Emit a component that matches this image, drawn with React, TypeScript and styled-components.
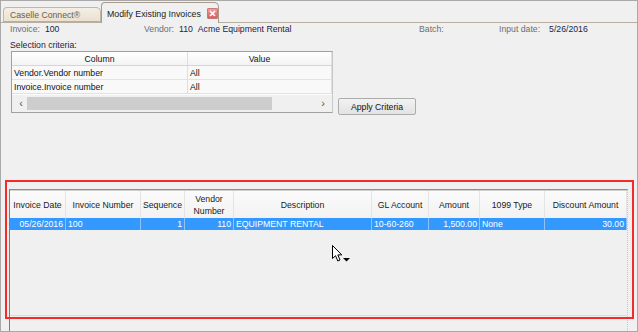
import styled, {createGlobalStyle} from 'styled-components';

const GlobalStyle = createGlobalStyle`
	html, body {
		margin: 0;
		padding: 0;
		background: #f0f0f0;
	}
	* {
		box-sizing: border-box;
	}
`;

interface Column {
	title: string;
	width: number;
	align: 'left' | 'right';
	value: string;
}

// invoice grid columns, widths taken from the screen
const columns: Column[] = [
	{title: 'Invoice Date', width: 56, align: 'right', value: '05/26/2016'},
	{title: 'Invoice Number', width: 75, align: 'left', value: '100'},
	{title: 'Sequence', width: 44, align: 'right', value: '1'},
	{title: 'Vendor\nNumber', width: 49, align: 'right', value: '110'},
	{title: 'Description', width: 138, align: 'left', value: 'EQUIPMENT RENTAL'},
	{title: 'GL Account', width: 57, align: 'left', value: '10-60-260'},
	{title: 'Amount', width: 51, align: 'right', value: '1,500.00'},
	{title: '1099 Type', width: 65, align: 'left', value: 'None'},
	{title: 'Discount Amount', width: 82, align: 'right', value: '30.00'},
];

const gridTemplate = columns.map((c) => `${c.width}px`).join(' ');

const criteria = [
	{column: 'Vendor.Vendor number', value: 'All'},
	{column: 'Invoice.Invoice number', value: 'All'},
];

const App = () => {
	return (
		<>
			<GlobalStyle />
			<Window>
				<TabStrip>
					<Tab>Caselle Connect®</Tab>
					<Tab $active>
						Modify Existing Invoices
						<CloseBox>
							<svg width="7" height="7" viewBox="0 0 7 7">
								<path d="M1 1 L6 6 M6 1 L1 6" stroke="#fff" strokeWidth="1.6" />
							</svg>
						</CloseBox>
					</Tab>
				</TabStrip>

				<InfoRow>
					<InfoField $gap={5}>
						<Label>Invoice:</Label>
						<Value>100</Value>
					</InfoField>
					<InfoField $gap={5}>
						<Label>Vendor:</Label>
						<Value>110</Value>
						<Value>Acme Equipment Rental</Value>
					</InfoField>
					<InfoField $gap={5}>
						<Label>Batch:</Label>
					</InfoField>
					<InfoField $gap={9}>
						<Label>Input date:</Label>
						<Value>5/26/2016</Value>
					</InfoField>
				</InfoRow>

				<SectionTitle>Selection criteria:</SectionTitle>

				<CriteriaArea>
					<CriteriaTable>
						<CriteriaRow $header>
							<CriteriaCell $header>Column</CriteriaCell>
							<CriteriaCell $header>Value</CriteriaCell>
						</CriteriaRow>
						{criteria.map((c) => (
							<CriteriaRow key={c.column}>
								<CriteriaCell>{c.column}</CriteriaCell>
								<CriteriaCell>{c.value}</CriteriaCell>
							</CriteriaRow>
						))}
						<HScroll>
							<ScrollArrow>‹</ScrollArrow>
							<ScrollTrack>
								<ScrollThumb />
							</ScrollTrack>
							<ScrollArrow>›</ScrollArrow>
						</HScroll>
					</CriteriaTable>
					<Button>Apply Criteria</Button>
				</CriteriaArea>

				<GridPanel>
					<GridHeader>
						{columns.map((c) => (
							<HeaderCell key={c.title}>{c.title}</HeaderCell>
						))}
					</GridHeader>
					<GridBody>
						<DataRow $selected>
							{columns.map((c) => (
								<DataCell key={c.title} $align={c.align}>
									{c.value}
								</DataCell>
							))}
						</DataRow>
					</GridBody>
				</GridPanel>

				{/* annotation drawn over the screenshot */}
				<Highlight />

				<Cursor width="20" height="20" viewBox="0 0 20 20">
					<path
						d="M0.5 0.5 L0.5 13.5 L3.5 10.7 L5.8 16 L8 15 L5.8 9.9 L9.8 9.9 Z"
						fill="#fff"
						stroke="#000"
						strokeWidth="1"
						strokeLinejoin="round"
					/>
					<path d="M11 13 L18 13 L14.5 16.5 Z" fill="#000" />
				</Cursor>
			</Window>
		</>
	);
};

const Window = styled.div`
	position: relative;
	width: 638px;
	height: 332px;
	border: 1px solid #a9a9a9;
	background: #f0f0f0;
	display: flex;
	flex-direction: column;
	font-family: 'Liberation Sans', Arial, sans-serif;
	font-size: 8.7px;
	color: #1c1c3c;
	overflow: hidden;
`;

const TabStrip = styled.div`
	display: flex;
	align-items: flex-end;
	height: 22px;
	padding-left: 2px;
	border-bottom: 1px solid #b9ada0;
`;

const Tab = styled.div<{$active?: boolean}>`
	display: flex;
	align-items: center;
	gap: 6px;
	height: ${(p) => (p.$active ? '21px' : '15px')};
	width: ${(p) => (p.$active ? '118px' : '98px')};
	margin-bottom: ${(p) => (p.$active ? '-1px' : '0')};
	padding: ${(p) => (p.$active ? '1px 0 0 5px' : '1px 0 0 6px')};
	background: ${(p) => (p.$active ? '#f0f0f0' : 'linear-gradient(#f4efe4, #e9e2d3)')};
	border: 1px solid ${(p) => (p.$active ? '#a89b8c' : '#c2b6a7')};
	border-bottom: ${(p) => (p.$active ? 'none' : '1px solid #b9ada0')};
	border-radius: 4px 5px 0 0;
	color: ${(p) => (p.$active ? '#1a1a1a' : '#6a5e50')};
	font-size: ${(p) => (p.$active ? '8.8px' : '8.7px')};
	white-space: nowrap;
`;

const CloseBox = styled.span`
	display: flex;
	align-items: center;
	justify-content: center;
	width: 11px;
	height: 11px;
	background: linear-gradient(#f0a0a0, #e0585a);
	border: 1px solid #c8787a;
	border-radius: 1px;
`;

const InfoRow = styled.div`
	display: grid;
	grid-template-columns: 134px 275px 80px 1fr;
	align-items: center;
	height: 12px;
	padding-left: 9px;
`;

const InfoField = styled.div<{$gap: number}>`
	display: flex;
	align-items: center;
	gap: ${(p) => p.$gap}px;
	white-space: nowrap;
`;

const Label = styled.span`
	color: #6e6e6e;
`;

const Value = styled.span`
	color: #1c1c48;
`;

const SectionTitle = styled.div`
	margin: 5px 0 0 9px;
	height: 11px;
	line-height: 11px;
	color: #1c1c3c;
`;

const CriteriaArea = styled.div`
	display: flex;
	align-items: flex-end;
	gap: 5px;
	margin: 0 0 0 10px;
`;

const CriteriaTable = styled.div`
	display: flex;
	flex-direction: column;
	width: 322px;
	height: 62px;
	border: 1px solid #a0a0a0;
	border-right-color: #c8c8c8;
	background: #fcfcfc;
`;

const CriteriaRow = styled.div<{$header?: boolean}>`
	display: grid;
	grid-template-columns: 176px 1fr;
	height: 14px;
	background: ${(p) => (p.$header ? 'linear-gradient(#ffffff, #f3f3f3)' : '#f9f9f9')};
	border-bottom: 1px solid ${(p) => (p.$header ? '#d5d5d5' : '#e2e2e2')};
`;

const CriteriaCell = styled.div<{$header?: boolean}>`
	display: flex;
	align-items: center;
	justify-content: ${(p) => (p.$header ? 'center' : 'flex-start')};
	padding-left: ${(p) => (p.$header ? '0' : '2px')};
	border-right: 1px solid #dedede;
	color: #111;
	white-space: nowrap;
	overflow: hidden;
`;

const HScroll = styled.div`
	display: flex;
	align-items: center;
	margin-top: auto;
	height: 17px;
	padding: 0 3px;
	background: #f0f0f0;
`;

const ScrollArrow = styled.span`
	width: 12px;
	text-align: center;
	font-size: 11px;
	line-height: 11px;
	color: #555;
`;

const ScrollTrack = styled.div`
	flex: 1;
	height: 13px;
	padding-right: 45px;
`;

const ScrollThumb = styled.div`
	height: 100%;
	background: #cdcdcd;
`;

const Button = styled.div`
	display: flex;
	align-items: center;
	justify-content: center;
	width: 78px;
	height: 17px;
	margin-bottom: -2px;
	border: 1px solid #acacac;
	border-radius: 2px;
	background: linear-gradient(#f2f2f2, #e3e3e3);
	color: #111;
`;

const GridPanel = styled.div`
	display: flex;
	flex-direction: column;
	flex: 1;
	width: 619px;
	margin: 76px 0 0 8px;
	border-left: 1px solid #7c7c7c;
	border-top: 1px solid #8e8e8e;
	border-right: 1px dotted #c8c8c8;
	padding-bottom: 15px;
`;

const GridHeader = styled.div`
	display: grid;
	grid-template-columns: ${gridTemplate};
	height: 28px;
	background: linear-gradient(#fbfbfb, #f2f2f2);
	border-top: 1px solid #d0d0d0;
`;

const HeaderCell = styled.div`
	display: flex;
	align-items: center;
	justify-content: center;
	text-align: center;
	white-space: pre-line;
	line-height: 12px;
	border-right: 1px solid #e4e4e4;
	color: #1a1a1a;
`;

const GridBody = styled.div`
	flex: 1;
	border-bottom: 1px solid #dcdcdc;
`;

const DataRow = styled.div<{$selected?: boolean}>`
	display: grid;
	grid-template-columns: ${gridTemplate};
	height: 12px;
	background: ${(p) => (p.$selected ? '#3399ff' : 'transparent')};
	color: ${(p) => (p.$selected ? '#ffffff' : '#111')};
`;

const DataCell = styled.div<{$align: 'left' | 'right'}>`
	display: flex;
	align-items: center;
	justify-content: ${(p) => (p.$align === 'right' ? 'flex-end' : 'flex-start')};
	padding: 0 2px;
	border-right: 1px solid #8ec3f7;
	white-space: nowrap;
	overflow: hidden;
`;

const Highlight = styled.div`
	position: absolute;
	left: 4px;
	top: 179px;
	width: 629px;
	height: 139px;
	border: 2px solid #f52a2a;
	pointer-events: none;
`;

const Cursor = styled.svg`
	position: absolute;
	left: 331px;
	top: 244px;
`;

export default App;
